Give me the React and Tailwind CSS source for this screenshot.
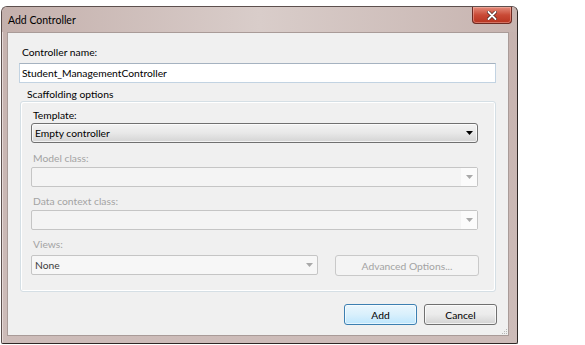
import React from "react";

function Arrow({ color }) {
  return (
    <svg width="7" height="4" viewBox="0 0 7 4" className="block">
      <path d="M0 0 H7 L3.5 4 Z" fill={color} />
    </svg>
  );
}

export default function App() {
  return (
    <div
      className="w-[585px] h-[345px] bg-white pt-[6px] pl-[1px] text-[10.3px] text-black overflow-hidden"
      style={{ fontFamily: 'Lato, "Noto Sans", sans-serif' }}
    >
      <div className="relative w-[517px] h-[338px] rounded-t-[6px] rounded-b-[2px] border border-[#5d504e] border-r-[#2f2826] border-b-[#2f2826] bg-gradient-to-b from-[#c6b2ae] to-[#cdbcb9] flex flex-col shadow-[inset_1px_1px_0_#e6dad8]">
        {/* title bar */}
        <div className="h-[25px] flex items-center pl-[6px] bg-gradient-to-r from-[#c4b0ac] via-[#d9cdca] to-[#c7b4b0] rounded-t-[5px]">
          <span className="text-[10.5px] leading-[12px] text-black">Add Controller</span>
        </div>
        {/* close button */}
        <div className="absolute left-[470px] top-0 w-[40px] h-[17px] rounded-b-[4px] border border-[#6e2a22] border-t-0 bg-gradient-to-b from-[#e38a7a] via-[#c94a36] to-[#b8331f] flex items-center justify-center shadow-[inset_0_0_0_1px_rgba(255,210,200,0.4)]">
          <svg width="10" height="9" viewBox="0 0 10 9">
            <path d="M1.5 1 L8.5 8 M8.5 1 L1.5 8" stroke="#3a1410" strokeWidth="3.2" strokeLinecap="round" />
            <path d="M1.5 1 L8.5 8 M8.5 1 L1.5 8" stroke="#ffffff" strokeWidth="2" strokeLinecap="round" />
          </svg>
        </div>
        {/* client area */}
        <div className="relative ml-[5px] mr-[8px] mb-[7px] flex-1 border border-[#a99b98] bg-[#f0f0f0] flex flex-col">
          <div className="pl-[14px] mt-[12px] h-[14px] leading-[14px]">Controller name:</div>
          <div className="ml-[11px] mt-[4px] w-[477px] h-[20px] bg-white border border-[#c2d3e2] border-t-[#a5b2c0] flex items-center pl-[2px] leading-[14px]">
            Student_ManagementController
          </div>
          <div className="ml-[19px] mt-[6px] h-[11px] leading-[11px]">Scaffolding options</div>
          <div className="ml-[12px] mt-[1px] w-[476px] h-[191px] border border-[#d5dfe5] rounded-[3px] shadow-[inset_1px_1px_0_#ffffff,inset_-1px_-1px_0_#ffffff] flex flex-col pl-[10px]">
            <div className="pl-[2px] mt-[6px] h-[14px] leading-[14px]">Template:</div>
            <div className="mt-[1px] w-[447px] h-[20px] rounded-[3px] border border-[#707070] bg-gradient-to-b from-[#f3f3f3] via-[#e8e8e8] to-[#d4d4d4] flex items-center justify-between pl-[3px] pr-[4px] shadow-[inset_0_0_0_1px_rgba(255,255,255,0.7)]">
              <span className="leading-[14px]">Empty controller</span>
              <Arrow color="#000" />
            </div>
            <div className="pl-[2px] mt-[8px] h-[14px] leading-[14px] text-[#a3a3a3]">Model class:</div>
            <div className="mt-[2px] w-[447px] h-[20px] rounded-[2px] border border-[#c5c5c5] bg-[#f4f4f4] flex justify-end">
              <div className="w-[16px] h-full bg-[#fbfbfb] flex items-center justify-center">
                <Arrow color="#a9a9a9" />
              </div>
            </div>
            <div className="pl-[2px] mt-[7px] h-[14px] leading-[14px] text-[#a3a3a3]">Data context class:</div>
            <div className="mt-[2px] w-[447px] h-[20px] rounded-[2px] border border-[#c5c5c5] bg-[#f4f4f4] flex justify-end">
              <div className="w-[16px] h-full bg-[#fbfbfb] flex items-center justify-center">
                <Arrow color="#a9a9a9" />
              </div>
            </div>
            <div className="pl-[2px] mt-[7px] h-[14px] leading-[14px] text-[#a3a3a3]">Views:</div>
            <div className="mt-[4px] flex items-start">
              <div className="w-[287px] h-[20px] rounded-[2px] border border-[#c5c5c5] bg-[#f7f7f7] flex items-center justify-between pl-[3px]">
                <span className="leading-[14px] text-[#3c3c3c]">None</span>
                <div className="w-[16px] h-full flex items-center justify-center">
                  <Arrow color="#a9a9a9" />
                </div>
              </div>
              <div className="ml-[17px] w-[144px] h-[21px] rounded-[3px] border border-[#c9c9c9] bg-[#f4f4f4] flex items-center justify-center text-[#a3a3a3] leading-[14px]">
                Advanced Options...
              </div>
            </div>
          </div>
          <div className="mt-[12px] flex justify-end pr-[11px] gap-[7px]">
            <div className="w-[73px] h-[21px] rounded-[3px] border border-[#3c7fb1] bg-gradient-to-b from-[#eaf6fd] via-[#d9f0fc] to-[#bee6fd] flex items-center justify-center leading-[14px] shadow-[inset_0_0_0_1px_rgba(255,255,255,0.6)]">
              Add
            </div>
            <div className="w-[73px] h-[21px] rounded-[3px] border border-[#707070] bg-gradient-to-b from-[#f2f2f2] via-[#ebebeb] to-[#d3d3d3] flex items-center justify-center leading-[14px] shadow-[inset_0_0_0_1px_rgba(255,255,255,0.7)]">
              Cancel
            </div>
          </div>
          <div className="absolute right-[1px] bottom-[1px] grid grid-cols-3 gap-[1px]">
            <span className="w-[1px] h-[1px]" />
            <span className="w-[1px] h-[1px]" />
            <span className="w-[1px] h-[1px] bg-[#b7b7b7]" />
            <span className="w-[1px] h-[1px]" />
            <span className="w-[1px] h-[1px] bg-[#b7b7b7]" />
            <span className="w-[1px] h-[1px] bg-[#b7b7b7]" />
            <span className="w-[1px] h-[1px] bg-[#b7b7b7]" />
            <span className="w-[1px] h-[1px] bg-[#b7b7b7]" />
            <span className="w-[1px] h-[1px] bg-[#b7b7b7]" />
          </div>
        </div>
      </div>
    </div>
  );
}
